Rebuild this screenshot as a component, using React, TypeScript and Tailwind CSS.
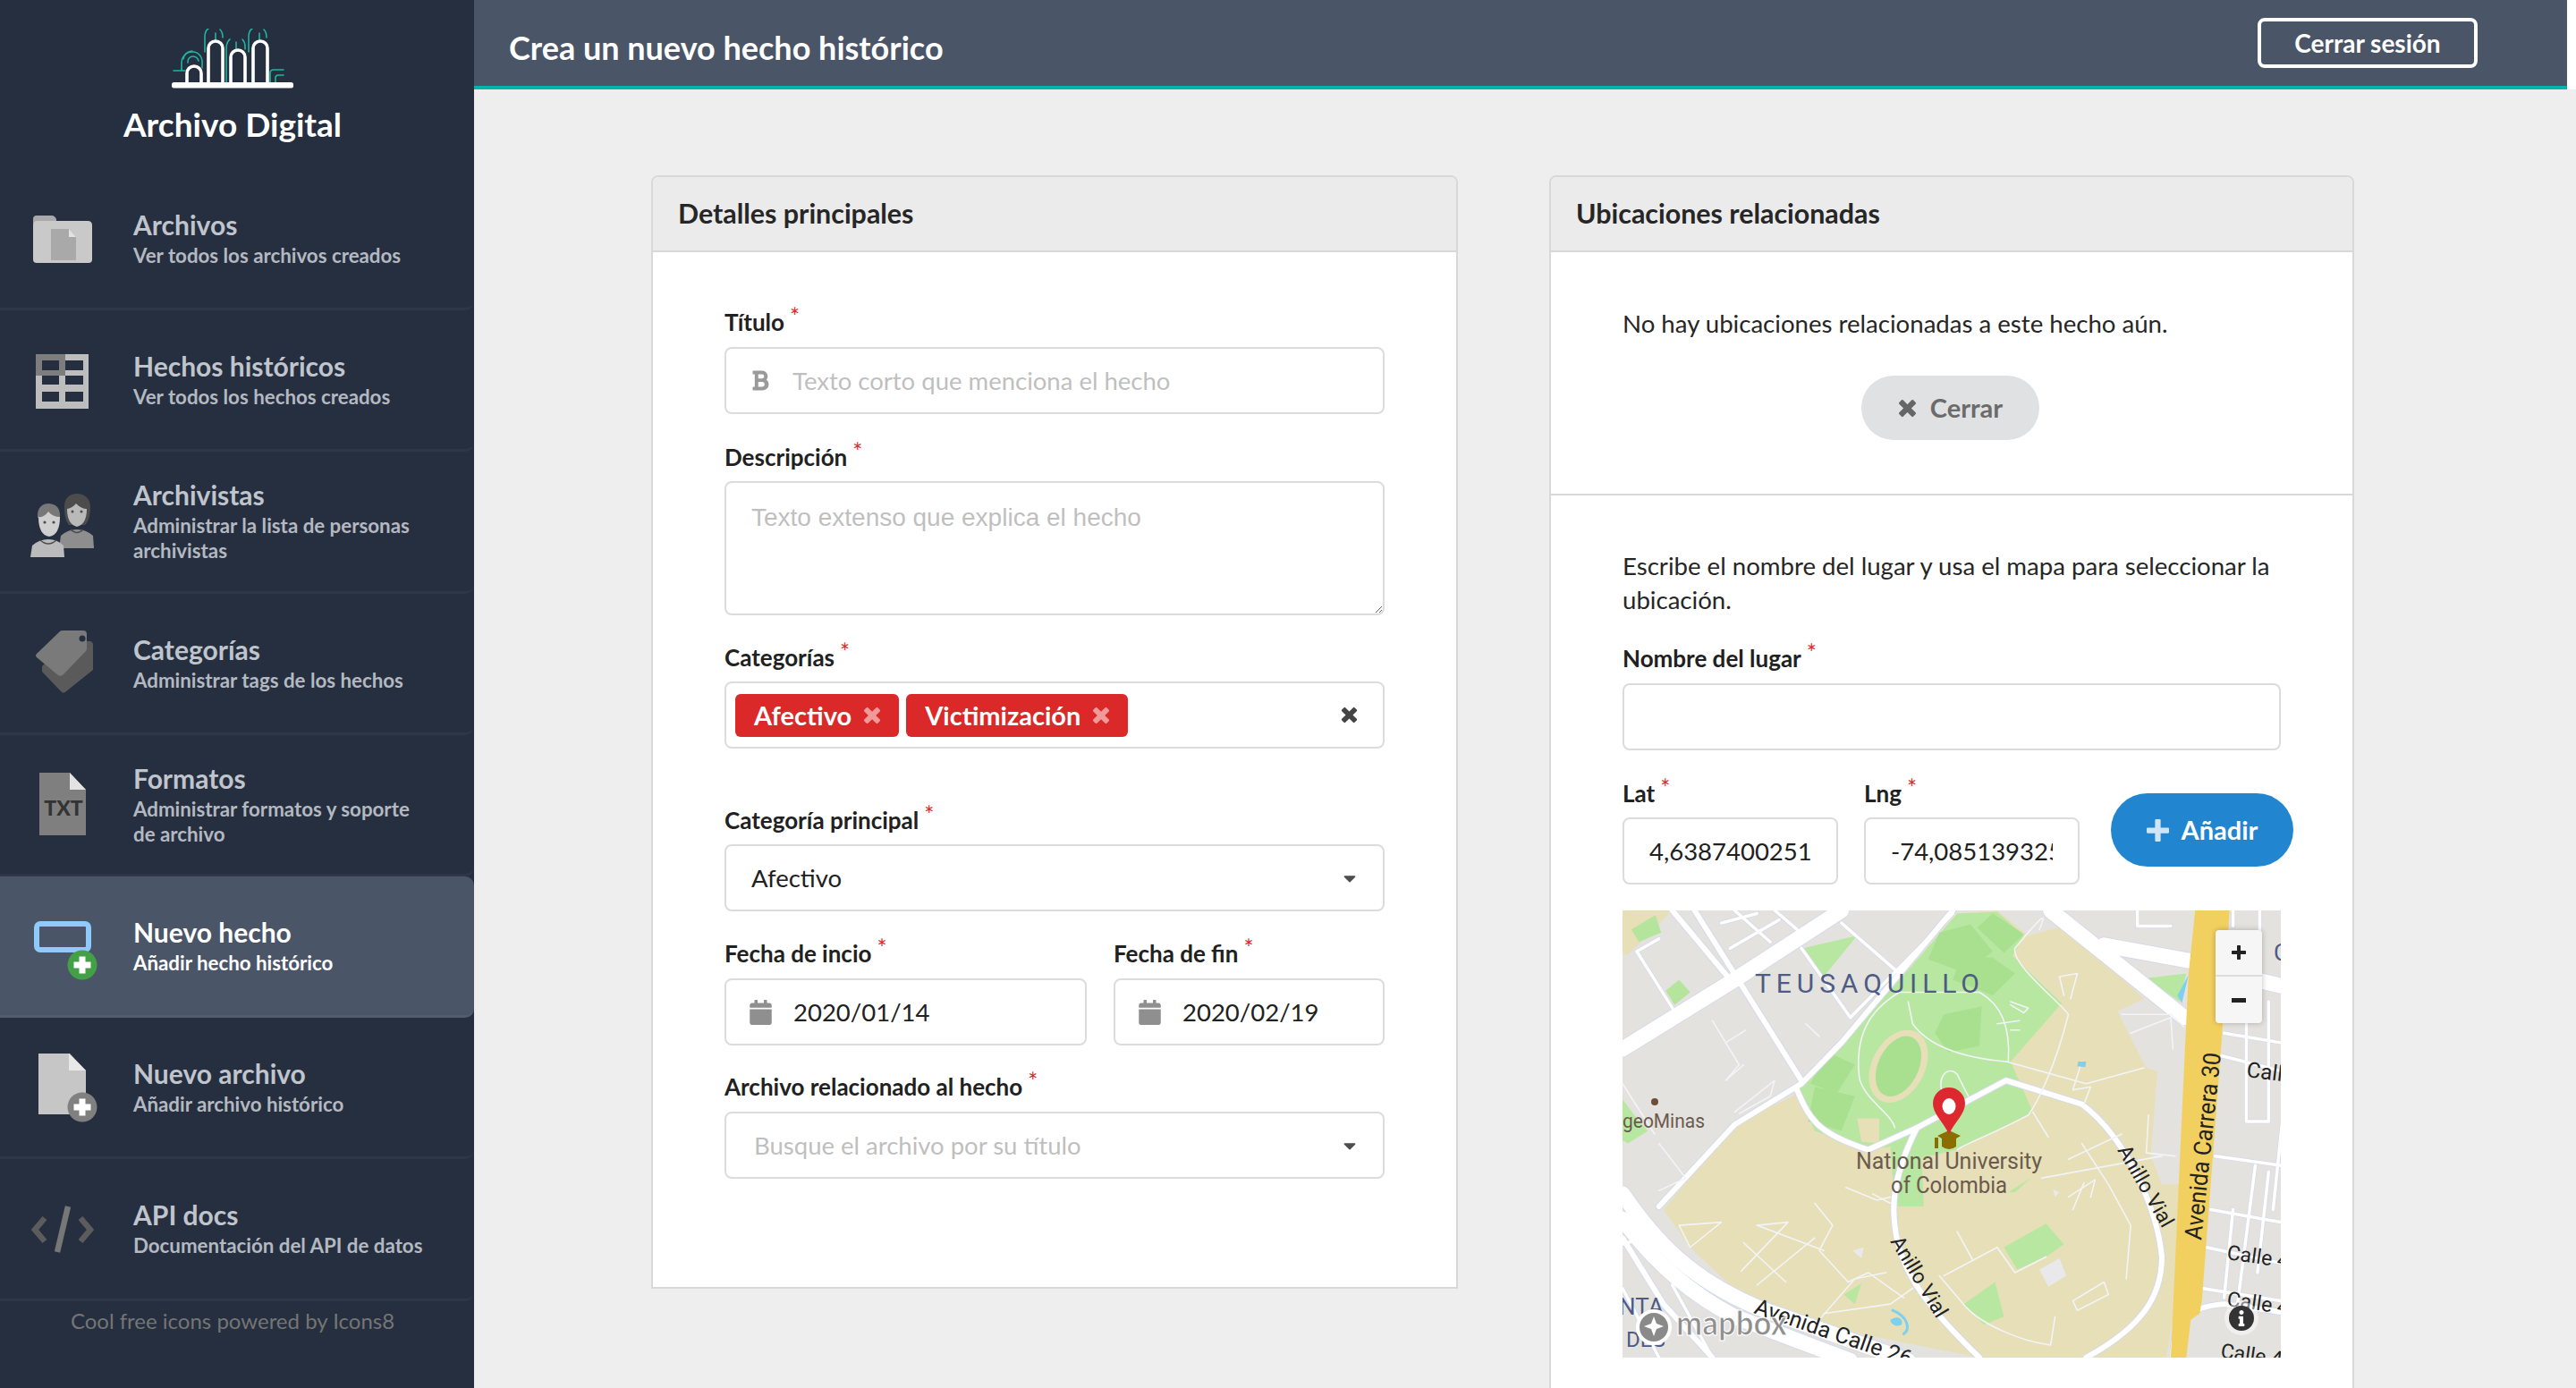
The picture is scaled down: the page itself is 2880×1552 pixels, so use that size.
import { ReactNode } from "react";
import { FaBold, FaCalendar, FaCaretDown, FaInfo } from "react-icons/fa";

const Cross = ({ className }: { className: string }) => (
  <svg viewBox="0 0 24 24" className={className} fill="currentColor">
    <path d="M6.5 1.5L12 7l5.5-5.5q1-1 2 0l3 3q1 1 0 2L17 12l5.5 5.5q1 1 0 2l-3 3q-1 1-2 0L12 17l-5.5 5.5q-1 1-2 0l-3-3q-1-1 0-2L7 12 1.500 6.500q-1-1 0-2l3-3q1-1 2 0z" />
  </svg>
);

const Plus = ({ className }: { className: string }) => (
  <svg viewBox="0 0 24 24" className={className} fill="currentColor">
    <path d="M9 1q0-1 1-1h4q1 0 1 1v8h8q1 0 1 1v4q0 1-1 1h-8v8q0 1-1 1h-4q-1 0-1-1v-8H1q-1 0-1-1v-4q0-1 1-1h8z" />
  </svg>
);

const Logo = () => (
  <svg width="136" height="67" viewBox="0 0 136 67" fill="none">
    <g stroke="#1fb5a0" strokeWidth="1.6" strokeLinecap="round">
      <path d="M2 47h13M11 47V38a12 12 0 0 1 12-12h2a11 11 0 0 1 9 10v8" />
      <path d="M13 34a10 10 0 0 1 10-9M18 38a6 6 0 0 1 6-7a7 7 0 0 1 6 5" />
      <path d="M37 26V10q0-8 4-10M54 1q3 3 3 9M49 13V5" />
      <path d="M61 60V23q0-8 4-11M79 12q3 3 3 8v3M72 23v-8" />
      <path d="M86 26V10q0-8 4-10M103 1q3 3 3 9M98 13V5" />
      <path d="M110 60V50q0-4 4-4h11M116 60v-5q0-3 3-3h6" />
    </g>
    <g stroke="#ffffff" strokeWidth="3.6">
      <path d="M17 60V50a8 8 0 0 1 16 0v10" />
      <path d="M41 60V22a8 8 0 0 1 16 0v38" />
      <path d="M66 60V32a8 8 0 0 1 16 0v28" />
      <path d="M91 60V22a8 8 0 0 1 16 0v38" />
    </g>
    <rect x="0" y="60" width="136" height="6.5" rx="2.500" fill="#ffffff" />
  </svg>
);

const IconFolder = () => (
  <svg width="80" height="80" viewBox="0 0 80 80">
    <path d="M7 18q0-4 4-4h17q3 0 5 4v20H7z" fill="#a9a9a9" />
    <path d="M7 26q0-6 4-6h57q5 0 5 5v38q0 4-4 4H11q-4 0-4-4z" fill="#c9c9c9" />
    <path d="M27 29h20l8 9v26H27z" fill="#a9a9a9" />
    <path d="M47 29l8 9h-8z" fill="#e2e2e2" />
  </svg>
);

const IconTable = () => (
  <svg width="80" height="80" viewBox="0 0 80 80">
    <path d="M10 11h59v61H10z" fill="#bdbdbd" />
    <path d="M10 11h33v24H10z" fill="#7d7d7d" />
    <g fill="#252f3f">
      <rect x="17" y="18" width="19" height="11" />
      <rect x="43" y="18" width="20" height="11" />
      <rect x="17" y="35" width="19" height="10" />
      <rect x="43" y="35" width="20" height="10" />
      <rect x="17" y="53" width="19" height="11" />
      <rect x="43" y="53" width="20" height="11" />
    </g>
  </svg>
);

const IconPeople = () => (
  <svg width="80" height="80" viewBox="0 0 80 80">
    <path d="M42 23c0-10 7-14 14-14s15 4 15 15c0 9-2 16-6 20H47c-4-5-5-12-5-21z" fill="#4c4c4c" />
    <path d="M36 70l2-14q8-7 18-7t18 7l1 14z" fill="#8e8e8e" />
    <path d="M45 26q6-1 10-6q6 6 12 6q0 17-11 20q-11-3-11-20z" fill="#b9b9b9" />
    <path d="M49 49q7 7 14 0" stroke="#4c4c4c" strokeWidth="1.5" fill="none" />
    <path d="M12 33c0-9 6-13 12-13s13 3 13 13v3H12z" fill="#787878" />
    <path d="M4 80l2-13q8-7 18-7t17 7l1 13z" fill="#bbbbbb" />
    <path d="M13 35q6 1 11-6q5 6 13 6q0 20-12 22q-12-2-12-22z" fill="#cfcfcf" />
    <path d="M15 61q9 8 18 0" stroke="#4c4c4c" strokeWidth="1.5" fill="none" />
    <circle cx="20" cy="41" r="1.6" fill="#4c4c4c" />
    <circle cx="30" cy="41" r="1.6" fill="#4c4c4c" />
    <circle cx="51" cy="29" r="1.5" fill="#4c4c4c" />
    <circle cx="61" cy="29" r="1.5" fill="#4c4c4c" />
  </svg>
);

const IconTag = () => (
  <svg width="80" height="80" viewBox="0 0 80 80">
    <path d="M17 44L45 16h26q2 0 3 3v29L44 72q-3 3-6 0L17 50z" fill="#5a5a5a" />
    <path d="M11 34q-2-2 0-4L37 5q1-1 3-1h23q4 0 4 4v16q0 2-1 3L41 53q-3 3-6 1z" fill="#7a7a7a" />
    <circle cx="62" cy="13" r="3.5" fill="#252f3f" />
  </svg>
);

const IconTxt = () => (
  <svg width="80" height="80" viewBox="0 0 80 80">
    <path d="M14 5h34l18 19v51H14z" fill="#7f7f7f" />
    <path d="M48 5l18 19H48z" fill="#e3e3e3" />
    <text x="41" y="53" textAnchor="middle" fontFamily="Lato, sans-serif" fontWeight="900" fontSize="23" fill="#333333">
      TXT
    </text>
  </svg>
);

const PlusBadge = ({ color }: { color: string }) => (
  <g>
    <circle cx="62" cy="61" r="16.5" fill={color} />
    <path d="M58.500 51.500h7v6h6v7h-6v6h-7v-6h-6v-7h6z" fill="#ffffff" />
  </g>
);

const IconNew = () => (
  <svg width="80" height="80" viewBox="0 0 80 80">
    <rect x="11" y="15" width="58" height="29" rx="4" fill="none" stroke="#90caf9" strokeWidth="6" />
    <PlusBadge color="#43a047" />
  </svg>
);

const IconNewDoc = () => (
  <svg width="80" height="80" viewBox="0 0 80 80">
    <path d="M13 2h35l18 19v49H13z" fill="#c6c6c6" />
    <path d="M47 2l19 19H47z" fill="#e8e8e8" />
    <g transform="translate(0 1)">
      <PlusBadge color="#808080" />
    </g>
  </svg>
);

const IconCode = () => (
  <svg width="80" height="80" viewBox="0 0 80 80" fill="none" stroke="#5c5c5c" strokeWidth="6.5">
    <path d="M20 28L9 41l11 13" />
    <path d="M60 28l11 13-11 13" />
    <path d="M46 15L34 66" stroke="#777777" />
  </svg>
);

const menu: { title: string; sub: ReactNode; icon: ReactNode; active?: boolean }[] = [
  { title: "Archivos", sub: "Ver todos los archivos creados", icon: <IconFolder /> },
  { title: "Hechos históricos", sub: "Ver todos los hechos creados", icon: <IconTable /> },
  { title: "Archivistas", sub: "Administrar la lista de personas archivistas", icon: <IconPeople /> },
  { title: "Categorías", sub: "Administrar tags de los hechos", icon: <IconTag /> },
  { title: "Formatos", sub: "Administrar formatos y soporte de archivo", icon: <IconTxt /> },
  { title: "Nuevo hecho", sub: "Añadir hecho histórico", icon: <IconNew />, active: true },
  { title: "Nuevo archivo", sub: "Añadir archivo histórico", icon: <IconNewDoc /> },
  { title: "API docs", sub: "Documentación del API de datos", icon: <IconCode /> },
];

const Sidebar = () => (
  <aside className="w-[530px] shrink-0 bg-[#252f3f] flex flex-col">
    <div className="h-[189px] shrink-0 flex flex-col items-center pt-[32px] pr-[10px]">
      <Logo />
      <div className="mt-[16px] text-[37px] leading-[48px] font-bold text-white">Archivo Digital</div>
    </div>
    {menu.map((m) => (
      <div
        key={m.title}
        className={
          m.active
            ? "h-[158.2px] shrink-0 flex items-center pl-[30px] bg-[#4a5568] rounded-r-[10px] border-b-[3px] border-[#525c6e]"
            : "h-[158.2px] shrink-0 flex items-center pl-[30px] border-b-[3px] border-[#2d3748] rounded-br-[10px]"
        }
      >
        <div className="w-[80px] h-[80px] shrink-0">{m.icon}</div>
        <div className="ml-[39px] max-w-[330px]">
          <div className={m.active ? "text-[30px] leading-[36px] font-bold text-white whitespace-nowrap" : "text-[30px] leading-[36px] font-bold text-[#c0c4cc] whitespace-nowrap"}>
            {m.title}
          </div>
          <div className={m.active ? "mt-[3px] text-[22.3px] leading-[28px] font-bold text-white" : "mt-[3px] text-[22.3px] leading-[28px] font-bold text-[#b4b8c0]"}>
            {m.sub}
          </div>
        </div>
      </div>
    ))}
    <div className="mt-[6px] pr-[10px] text-center text-[24px] leading-[32px] text-[#757575]">Cool free icons powered by Icons8</div>
  </aside>
);

const Label = ({ children, className = "" }: { children: ReactNode; className?: string }) => (
  <div className={"text-[26px] leading-[28px] font-bold text-[#212121] whitespace-nowrap " + className}>
    {children}
    <span className="ml-[6px] inline-block -translate-y-[6px] text-[#db2828] font-normal">*</span>
  </div>
);

const boxClass = "h-[75px] w-full border-2 border-[#dcdcdd] rounded-[8px] bg-white text-[27.5px] text-[#212121] outline-none";

const Tag = ({ text }: { text: string }) => (
  <div className="h-[48px] rounded-[6px] bg-[#db2828] text-white text-[29px] font-bold flex items-center pl-[21px] pr-[20px]">
    {text}
    <Cross className="ml-[13px] text-[#f09a9a] w-[20px] h-[20px]" />
  </div>
);

const Caret = () => <FaCaretDown className="w-[22px] h-[22px] text-[#4d4d4d]" />;

const DateField = ({ label, value, className }: { label: string; value: string; className: string }) => (
  <div className={className}>
    <Label className="mb-[14px]">{label}</Label>
    <div className={boxClass + " flex items-center pl-[26px]"}>
      <FaCalendar className="w-[25px] h-[28px] text-[#8f8f8f] shrink-0" />
      <span className="ml-[24px]">{value}</span>
    </div>
  </div>
);

const Card = ({ title, children, className }: { title: string; children: ReactNode; className: string }) => (
  <section className={"border-2 border-[#d8d8d9] rounded-t-[8px] bg-white " + className}>
    <div className="h-[84px] bg-[#ebebeb] rounded-t-[6px] border-b-2 border-[#d8d8d9] flex items-center pl-[28px] text-[30.4px] font-bold text-[#262626]">
      {title}
    </div>
    {children}
  </section>
);

const Details = () => (
  <Card title="Detalles principales" className="w-[902px] h-[1245px] shrink-0">
    <div className="pt-[64px] px-[80px]">
      <Label className="mb-[14px]">Título</Label>
      <div className={boxClass + " flex items-center pl-[28px]"}>
        <FaBold className="w-[20px] h-[25px] text-[#9a9a9a] shrink-0" />
        <input readOnly placeholder="Texto corto que menciona el hecho" className="ml-[26px] flex-1 outline-none placeholder:text-[#bfbfbf]" />
      </div>
      <Label className="mt-[34px] mb-[13px]">Descripción</Label>
      <textarea
        readOnly
        placeholder="Texto extenso que explica el hecho"
        className="block w-full h-[150px] border-2 border-[#dcdcdd] rounded-[8px] px-[28px] py-[21px] text-[28px] leading-[36px] font-['Liberation_Sans',sans-serif] outline-none placeholder:text-[#bfbfbf]"
      />
      <Label className="mt-[33px] mb-[13px]">Categorías</Label>
      <div className={boxClass + " flex items-center pl-[10px] pr-[28px] gap-[8px]"}>
        <Tag text="Afectivo" />
        <Tag text="Victimización" />
        <Cross className="ml-auto w-[19px] h-[19px] text-[#444444]" />
      </div>
      <Label className="mt-[66px] mb-[13px]">Categoría principal</Label>
      <div className={boxClass + " flex items-center justify-between pl-[28px] pr-[26px]"}>
        <span>Afectivo</span>
        <Caret />
      </div>
      <div className="flex mt-[33px] gap-[30px]">
        <DateField label="Fecha de incio" value="2020/01/14" className="w-[405px]" />
        <DateField label="Fecha de fin" value="2020/02/19" className="w-[303px]" />
      </div>
      <Label className="mt-[32px] mb-[14px]">Archivo relacionado al hecho</Label>
      <div className={boxClass + " flex items-center justify-between pl-[31px] pr-[26px] text-[#bfbfbf]"}>
        <span>Busque el archivo por su título</span>
        <Caret />
      </div>
    </div>
  </Card>
);

const MAJOR = [
  "M48 490L300 270L540 50",
  "M48 950C120 1100 200 1220 350 1310L690 1480",
  "M48 1030C110 1150 190 1260 300 1340L560 1480",
  "M1010 50L1310 390",
  "M1130 160L1380 225",
  "M1410 250L1530 290",
];
const MEDIUM = [
  "M160 50L290 270",
  "M210 50L450 590",
  "M130 990L300 730L450 600L540 470L790 50",
  "M48 1090L140 1300L250 1470",
  "M440 620C470 720 490 760 600 810L710 740L910 590L1080 665C1180 770 1250 1000 1260 1150C1260 1270 1220 1370 1090 1470",
  "M710 740C670 850 650 950 660 1050C670 1200 740 1320 850 1470",
  "M1285 1470C1285 1340 1320 1310 1400 1300L1527 1325",
];
const MINOR = [
  "M300 50L380 150M390 50L440 110",
  "M130 140L80 180L160 360",
  "M270 90L350 60M290 170L400 80",
  "M450 170L560 390L790 60",
  "M540 90L670 250",
  "M1205 50V100H1280M1480 50V130M1420 50V100",
  "M1450 400V720H1500V340",
  "M1390 510L1527 560",
  "M1380 830L1527 860M1470 860L1430 1300",
  "M1370 1000L1527 1040M1360 1120L1527 1170M1350 1250L1527 1290",
  "M1530 730L1510 1000",
  "M48 1250L130 1470",
  "M160 1240L250 1470",
  "M48 1110L120 1080",
  "M1420 1000L1400 1280M1500 880L1475 1200",
  "M1380 340V400M1400 440L1527 470",
];
const THIN = [
  "M670 310C600 370 570 450 580 580C590 650 650 690 660 740",
  "M670 310L850 310C900 350 920 420 915 530",
  "M690 340L700 410C740 490 830 520 910 530",
  "M910 530L1090 600L1220 550",
  "M930 170C1000 50 1000 60 985 110M930 170C920 220 1030 340 1050 380C1020 550 980 660 960 700C880 760 820 790 800 810",
  "M770 640C750 580 780 540 800 570L825 640",
  "M970 690L1005 770M1085 665L1100 610L1060 620L1080 530",
  "M1050 840L1170 760M1080 790L1140 920L1190 1050L1180 1220",
  "M990 900L1260 830M1050 960L1110 905L1100 960",
  "M550 930L620 970L650 960M610 950L650 980",
  "M480 980L520 1050L490 1130L555 1230L600 1200L680 1280",
  "M420 1040L350 1050L500 1130M320 1105L415 1230M350 1240L480 1090M315 1195L420 1040",
  "M770 1210L890 1120L930 1200L1000 1150M760 1210L820 1310C860 1370 950 1420 1010 1430L1020 1340",
  "M800 1070L835 1160M1060 1290L1130 1230L1140 1270L1070 1320Z",
  "M490 1350L570 1220L640 1200M500 1330L650 1300L700 1250",
  "M175 1050L270 1040L200 1120L175 1050",
  "M250 400L310 540L280 590L320 540",
  "M300 690L390 590L380 640L310 695",
  "M130 790L190 900L130 940",
  "M48 600L120 760",
  "M460 410L490 450",
  "M280 470L325 430",
  "M1170 380L1280 380L1310 420M1190 440L1280 390L1285 490M1230 700L1225 820L1290 830",
  "M920 340L960 360L950 375L920 350M890 410L940 400M920 430L940 430",
  "M1040 320L1030 260L1070 250L1055 330",
  "M1060 1000L1085 915",
];

const MapView = () => (
  <div className="relative w-[736px] h-[500px] overflow-hidden bg-[#e4e2de]">
    <svg width="736" height="500" viewBox="0 0 736 500" className="block">
      <g transform="translate(-23.88 -17.6) scale(0.4975 0.3521)" fill="none" strokeLinecap="round" strokeLinejoin="round">
        <path d="M48 50H160L60 190H48z" fill="#e6dfb8" />
        <path d="M68 110L122 65L135 120L85 150z" fill="#b5e59c" />
        <path d="M145 305L175 270L200 310L165 350z" fill="#b5e59c" />
        <path d="M140 1000L300 730L430 640L640 320L800 60L890 50L960 130L1040 100L1220 330L1160 370L1225 550L1250 560L1235 830L1260 920L1300 920L1290 1300L1270 1470H850L600 1400L350 1320L200 1120z" fill="#e6dfb8" />
        <path d="M440 620L640 320L800 60L890 55L950 130L925 195L1035 345L920 530L970 690L800 810L720 835L725 990L660 990L650 800L600 810L480 750z" fill="#b7e7a0" />
        <path d="M455 170L575 130L500 260z" fill="#b7e7a0" />
        <path d="M760 120L830 95L880 180L820 250L735 205zM880 60L950 125L905 185L845 105zM810 195L880 200L930 250L880 320L790 270zM770 380L855 355L850 480L780 500L750 440zM480 610L570 640L540 750L465 720zM510 500L570 540L530 630L470 600z" fill="#a8e090" />
        <ellipse cx="668" cy="545" rx="62" ry="118" transform="rotate(14 668 545)" fill="#e6dfb8" />
        <ellipse cx="668" cy="545" rx="47" ry="98" transform="rotate(14 668 545)" fill="#a8e090" />
        <path d="M575 710H625V790L585 785z" fill="#e6dfb8" />
        <path d="M905 1120L1000 1045L1040 1110L1000 1150L935 1190zM815 1300L885 1230L905 1340L860 1365zM545 1270L585 1235L570 1300zM915 945L965 900L930 945z" fill="#b7e7a0" />
        <path d="M985 1190L1030 1155L1045 1210L1005 1245zM565 1130L590 1120L585 1155zM1015 935L1030 945L1020 960z" fill="#e9e9ec" />
        <path d="M48 650L85 720L105 750L60 790L48 780z" fill="#b7e7a0" />
        <path d="M1195 270L1315 250L1300 340L1250 290z" fill="#b7e7a0" />

        {MAJOR.map((d) => (
          <path key={d} d={d} stroke="#d6daea" strokeWidth="19" vectorEffect="non-scaling-stroke" />
        ))}
        {MEDIUM.map((d) => (
          <path key={d} d={d} stroke="#d6daea" strokeWidth="8" vectorEffect="non-scaling-stroke" />
        ))}
        {MINOR.map((d) => (
          <path key={d} d={d} stroke="#d6daea" strokeWidth="5" vectorEffect="non-scaling-stroke" />
        ))}
        {MAJOR.map((d) => (
          <path key={d} d={d} stroke="#ffffff" strokeWidth="17" vectorEffect="non-scaling-stroke" />
        ))}
        {MEDIUM.map((d) => (
          <path key={d} d={d} stroke="#ffffff" strokeWidth="6" vectorEffect="non-scaling-stroke" />
        ))}
        {MINOR.map((d) => (
          <path key={d} d={d} stroke="#ffffff" strokeWidth="3.5" vectorEffect="non-scaling-stroke" />
        ))}
        {THIN.map((d) => (
          <path key={d} d={d} stroke="#f3f4f8" strokeWidth="1.6" vectorEffect="non-scaling-stroke" />
        ))}

        <path d="M1335 50H1412L1395 450L1350 1290L1345 1330L1325 1350L1315 1470H1280L1285 1320L1305 700L1320 250z" fill="#f2d060" />
        <path d="M1320 255L1305 345L1295 320z" fill="#7fd0ee" />
        <path d="M1072 530L1090 530L1088 548L1070 545zM650 1350C665 1335 680 1345 675 1365C665 1375 650 1365 650 1350z" fill="#7fd0ee" />
        <path d="M655 1320C690 1340 695 1380 680 1395" stroke="#7fd0ee" strokeWidth="3" vectorEffect="non-scaling-stroke" />
      </g>

      <g fontFamily="Roboto, sans-serif">
        <text x="148" y="92" fontSize="30" fill="#4d5b85" textLength="251" lengthAdjust="spacing">TEUSAQUILLO</text>
        <circle cx="36" cy="214" r="4" fill="#6f4e37" />
        <text x="0" y="243" fontSize="22" fill="#6b5a4e" textLength="92" lengthAdjust="spacingAndGlyphs">geoMinas</text>
        <text x="365" y="289" fontSize="25" textAnchor="middle" fill="#6b5a4e" textLength="208" lengthAdjust="spacingAndGlyphs">National University</text>
        <text x="365" y="316" fontSize="25" textAnchor="middle" fill="#6b5a4e" textLength="130" lengthAdjust="spacingAndGlyphs">of Colombia</text>
        <text transform="translate(553 268) rotate(60)" fontSize="23" fill="#222222">Anillo Vial</text>
        <text transform="translate(299 370) rotate(59)" fontSize="23" fill="#222222">Anillo Vial</text>
        <text transform="translate(647 369) rotate(-84)" fontSize="27" fill="#222222" textLength="210" lengthAdjust="spacingAndGlyphs">Avenida Carrera 30</text>
        <text transform="translate(146 450) rotate(19)" fontSize="25" fill="#222222">Avenida Calle 26</text>
        <text transform="translate(697 186) rotate(7)" fontSize="24" fill="#222222">Calle</text>
        <text transform="translate(675 390) rotate(8)" fontSize="23" fill="#222222">Calle 4</text>
        <text transform="translate(675 442) rotate(8)" fontSize="23" fill="#222222">Calle 4</text>
        <text transform="translate(668 500) rotate(8)" fontSize="23" fill="#222222">Calle 4</text>
        <text x="-4" y="452" fontSize="26" fill="#4d5b85">NTA</text>
        <text x="4" y="488" fontSize="24" fill="#4d5b85">DES</text>
        <text x="728" y="56" fontSize="26" fill="#4d5b85">C</text>
      </g>

      <g>
        <circle cx="35" cy="466" r="18" fill="#8a8a8a" stroke="#ffffff" strokeWidth="4" />
        <path d="M35 454l3 8 8 3-8 3-3 8-3-8-8-3 8-3z" fill="#ffffff" />
        <text x="60" y="475" fontFamily="Lato, sans-serif" fontSize="37" fontWeight="900" fill="#8f8f8f" stroke="#ffffff" strokeWidth="1.2" textLength="124" lengthAdjust="spacingAndGlyphs">mapbox</text>
      </g>

      <path d="M352 252l13-6 13 6-5 3v9q-8 6-16 0v-9z" fill="#8b6d00" />
      <path d="M349 254v12h4v-12z" fill="#8b6d00" />
      <path d="M365 250C358 236 347 227 347 216a18 18 0 0 1 36 0C383 227 372 236 365 250z" fill="#dc282e" />
      <ellipse cx="365" cy="219" rx="7.5" ry="9" fill="#ffffff" />
      <circle cx="692" cy="456" r="19" fill="#ffffff" fillOpacity="0.45" />
      <circle cx="692" cy="456" r="14" fill="#333333" />
    </svg>
    <FaInfo className="absolute left-[687px] top-[447px] w-[10px] h-[18px] text-white" />
    <div className="absolute left-[663px] top-[22px] w-[52px] rounded-[4px] bg-[#f6f6f6] shadow-[0_0_6px_rgba(0,0,0,0.25)] flex flex-col">
      <div className="h-[52px] border-b-2 border-[#dddddd] flex items-center justify-center">
        <Plus className="w-[16px] h-[16px] text-[#222222]" />
      </div>
      <div className="h-[52px] flex items-center justify-center">
        <div className="w-[16px] h-[5px] bg-[#222222]" />
      </div>
    </div>
  </div>
);

const Locations = () => (
  <Card title="Ubicaciones relacionadas" className="w-[900px] shrink-0 h-[1400px]">
    <div className="h-[272px] border-b-2 border-[#d8d8d9] pl-[80px] pr-[79px] pt-[62px] text-[#262626]">
      <div className="text-[27.6px] leading-[36px]">No hay ubicaciones relacionadas a este hecho aún.</div>
      <div className="mt-[40px] flex justify-center pr-[4px]">
        <div className="w-[199px] h-[72px] rounded-full bg-[#e0e1e2] flex items-center justify-center text-[29px] font-bold text-[#6b6b6b]">
          <Cross className="w-[21px] h-[21px] mr-[15px] text-[#666666]" />
          <span>Cerrar</span>
        </div>
      </div>
    </div>
    <div className="pl-[80px] pt-[60px]">
      <div className="text-[27.6px] leading-[38px] text-[#262626] w-[736px]">
        Escribe el nombre del lugar y usa el mapa para seleccionar la ubicación.
      </div>
      <Label className="mt-[32px] mb-[14px]">Nombre del lugar</Label>
      <div className="w-[736px]">
        <input readOnly className={boxClass} />
      </div>
      <div className="flex items-end mt-[34px]">
        <div className="w-[241px] shrink-0">
          <Label className="mb-[13px]">Lat</Label>
          <input readOnly value="4,6387400251" className={boxClass + " px-[28px]"} />
        </div>
        <div className="w-[241px] shrink-0 ml-[29px]">
          <Label className="mb-[13px]">Lng</Label>
          <input readOnly value="-74,0851393251" className={boxClass + " px-[28px]"} />
        </div>
        <div className="ml-[35px] mb-[20px] w-[204px] h-[82px] shrink-0 rounded-full bg-[#2185d0] text-white text-[29px] font-bold flex items-center justify-center">
          <Plus className="w-[25px] h-[25px] mr-[14px] text-[#cfe4f5]" />
          <span>Añadir</span>
        </div>
      </div>
      <div className="mt-[29px]">
        <MapView />
      </div>
    </div>
  </Card>
);

export default function App() {
  return (
    <div className="flex w-[2880px] h-[1552px] overflow-hidden bg-[#eeeeee] font-['Lato',sans-serif]">
      <Sidebar />
      <main className="flex-1 min-w-0 flex flex-col">
        <div className="h-[100px] shrink-0 bg-white">
          <header className="h-[100px] w-[2340px] bg-[#4a5568] border-b-[4px] border-[#00b5ad] flex items-center justify-between pl-[39px] pr-[100px]">
            <h1 className="mt-[10px] text-[36px] font-bold text-white">Crea un nuevo hecho histórico</h1>
            <div className="w-[246px] h-[56px] border-[4px] border-white rounded-[8px] flex items-center justify-center text-[28px] font-bold text-white">
              Cerrar sesión
            </div>
          </header>
        </div>
        <div className="flex items-start pt-[96px] pl-[198px] gap-[102px]">
          <Details />
          <Locations />
        </div>
      </main>
    </div>
  );
}
